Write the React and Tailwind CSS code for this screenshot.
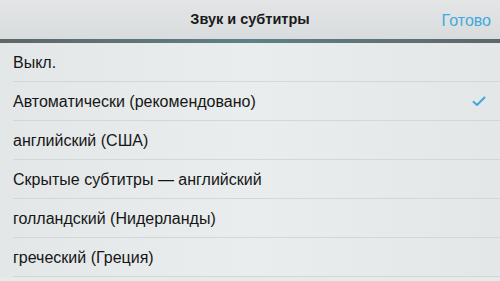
export default function App() {
  const rows = [
    { label: "Выкл." },
    { label: "Автоматически (рекомендовано)", checked: true },
    { label: "английский (США)" },
    { label: "Скрытые субтитры — английский" },
    { label: "голландский (Нидерланды)" },
    { label: "греческий (Греция)" },
  ];

  return (
    <div
      className="w-[500px] h-[281px] overflow-hidden bg-[#e6eaeb] text-[#111]"
      style={{ fontFamily: '"Liberation Sans", Arial, sans-serif' }}
    >
      {/* header */}
      <div className="relative h-[39px] flex items-center justify-center bg-gradient-to-b from-[#e3e5e6] to-[#d9dcdd]">
        <span className="text-[14.5px] font-semibold text-[#1a1a1a] pt-[1px]">Звук и субтитры</span>
        <span className="absolute right-[9px] top-[9px] text-[16px] text-[#44a9dd]">Готово</span>
      </div>
      <div className="h-[4px] bg-gradient-to-r from-[#5e6668] via-[#5d8188] to-[#5e6668]" />

      {/* list */}
      <div className="bg-gradient-to-r from-[#e3e7e8] via-[#e9eded] to-[#e3e7e8]">
        {rows.map((r, i) => (
          <div key={i} className="pl-[13px]">
            <div className="flex items-center justify-between pr-[13px] h-[39px] border-b border-[#d3d7d8]">
              <span className="text-[16px] text-[#161616] pt-[2px]">{r.label}</span>
              {r.checked && (
                <svg width="14" height="11" viewBox="0 0 14 11" className="mr-[1px]">
                  <path d="M1.5 5.8 L5 9 L12.5 1.5" fill="none" stroke="#3ea8df" strokeWidth="2" strokeLinecap="round" strokeLinejoin="round" />
                </svg>
              )}
            </div>
          </div>
        ))}
      </div>
    </div>
  );
}
